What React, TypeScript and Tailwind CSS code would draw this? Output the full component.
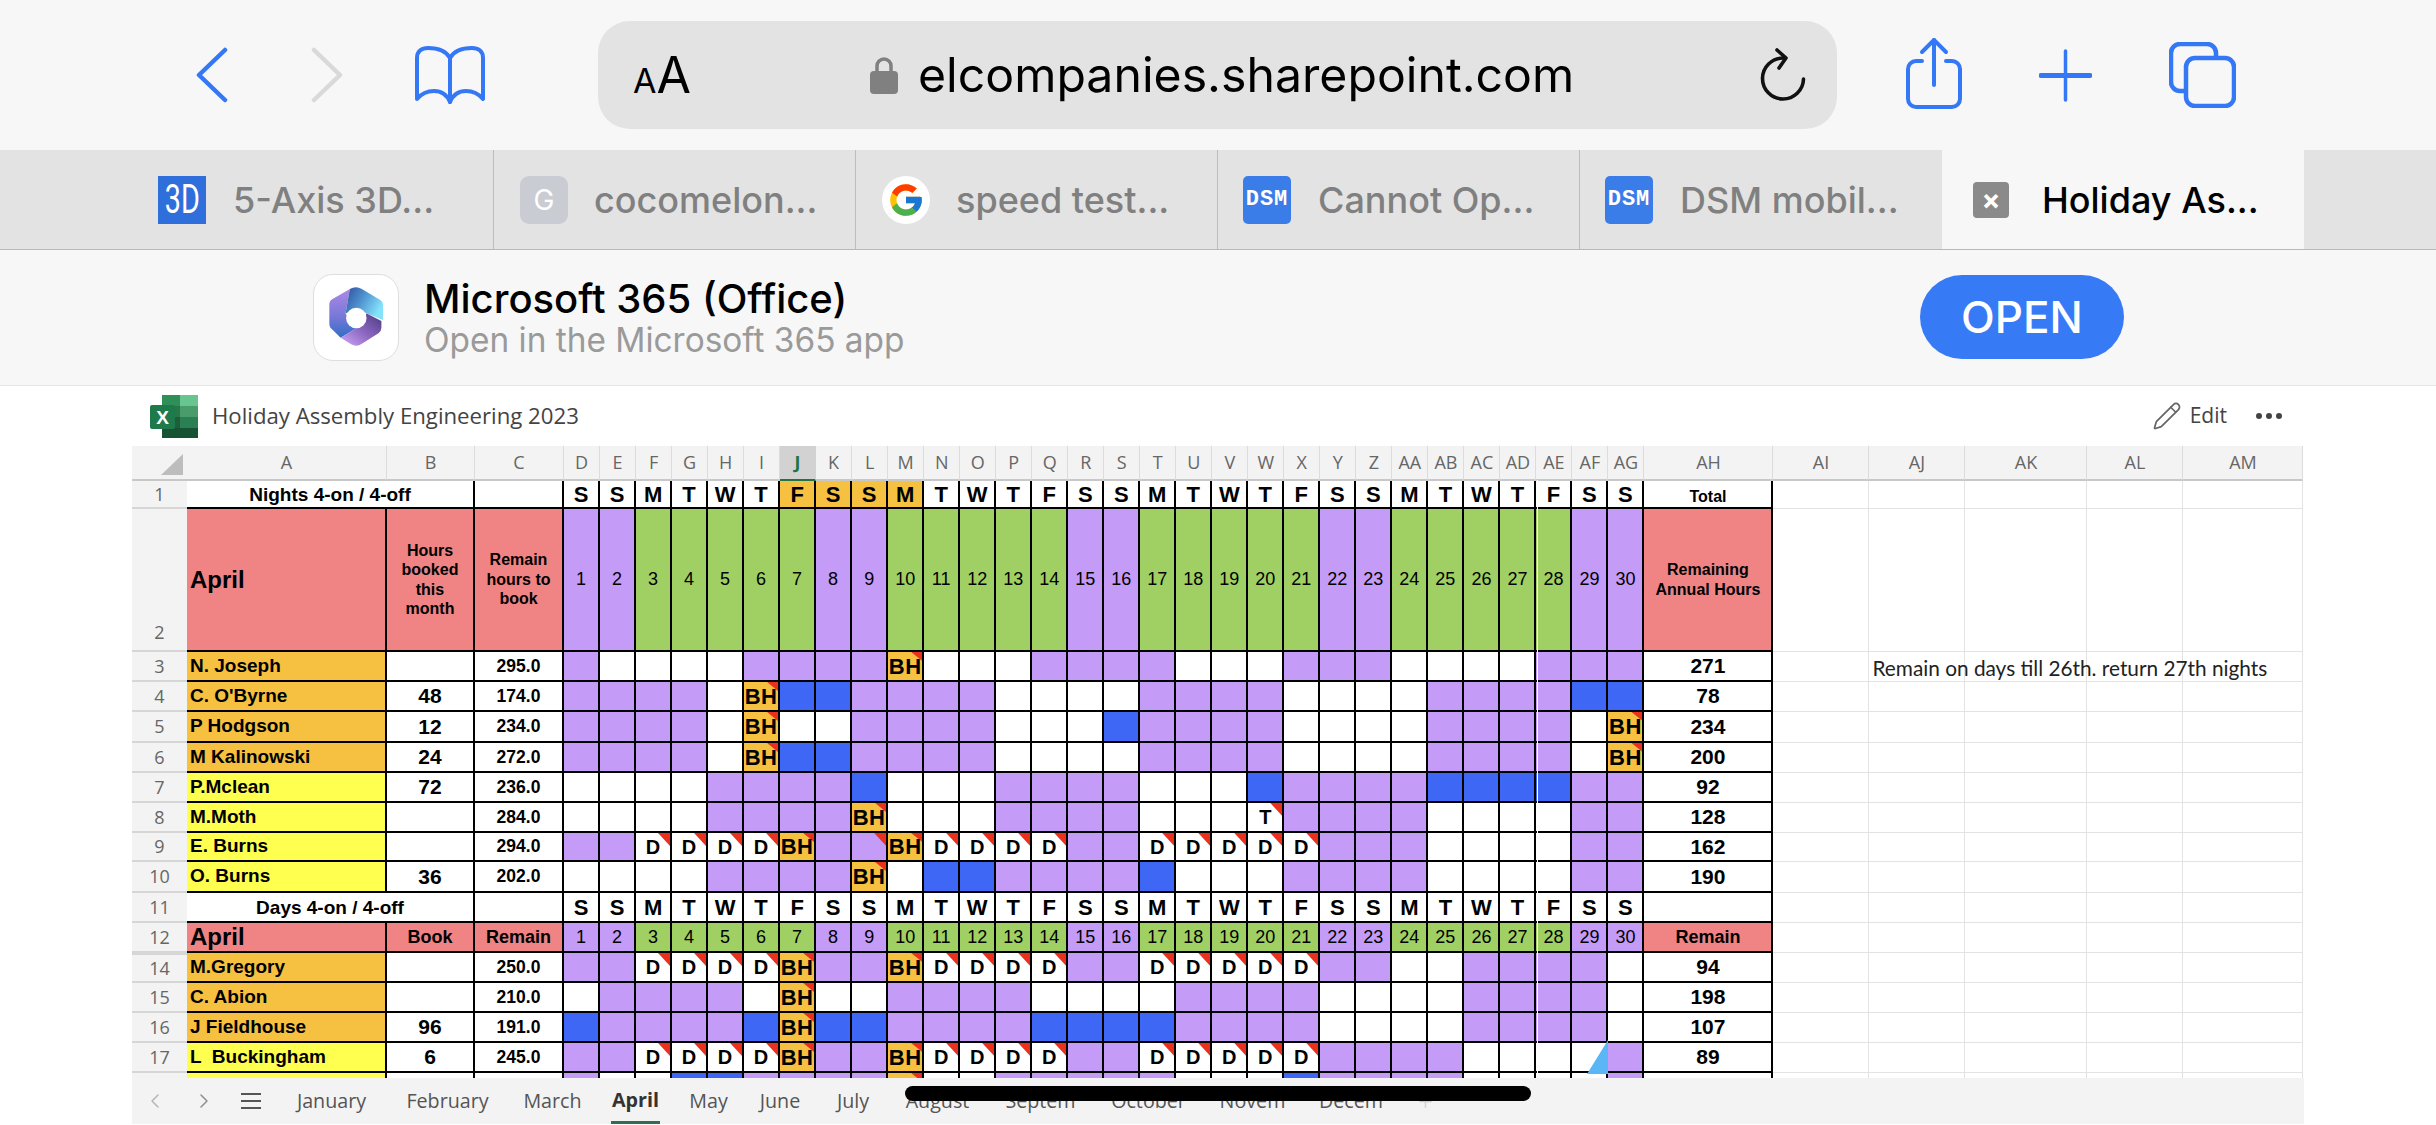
import React from "react";
import { ChevronLeft, ChevronRight, Pencil } from "lucide-react";
import { FcGoogle } from "react-icons/fc";

const cols = ["A","B","C","D","E","F","G","H","I","J","K","L","M","N","O","P","Q","R","S","T","U","V","W","X","Y","Z","AA","AB","AC","AD","AE","AF","AG","AH","AI","AJ","AK","AL","AM"];
const dayLetters = "SSMTWTFSSMTWTFSSMTWTFSSMTWTFSS".split("");
const days = dayLetters.map((_, i) => i + 1);
const isWeekend = (d: number) => [1, 2, 8, 9, 15, 16, 22, 23, 29, 30].includes(d);

type Person = { row: string; name: string; tone: string; booked: string; remain: string; cells: string; total: string };

const ORANGE = "bg-[#f6c141]";
const YELLOW = "bg-[#ffff4f]";

const nights: Person[] = [
    { row: "3", name: "N. Joseph", tone: ORANGE, booked: "", remain: "295.0", cells: "pwwwwppppHwwwppppwwwpppwwwwppp", total: "271" },
    { row: "4", name: "C. O'Byrne", tone: ORANGE, booked: "48", remain: "174.0", cells: "ppppwHbbppppwwwwppppwwwwppppbb", total: "78" },
    { row: "5", name: "P Hodgson", tone: ORANGE, booked: "12", remain: "234.0", cells: "ppppwHwwppppwwwbppppwwwwppppwH", total: "234" },
    { row: "6", name: "M Kalinowski", tone: ORANGE, booked: "24", remain: "272.0", cells: "ppppwHbbppppwwwwppppwwwwppppwH", total: "200" },
    { row: "7", name: "P.Mclean", tone: YELLOW, booked: "72", remain: "236.0", cells: "wwwwppppbwwwppppwwwbppppbbbbpp", total: "92" },
    { row: "8", name: "M.Moth", tone: YELLOW, booked: "", remain: "284.0", cells: "wwwwppppHwwwppppwwwTppppwwwwpp", total: "128" },
    { row: "9", name: "E. Burns", tone: YELLOW, booked: "", remain: "294.0", cells: "ppDDDDHpfHDDDDppDDDDDpppwwwwpp", total: "162" },
    { row: "10", name: "O. Burns", tone: YELLOW, booked: "36", remain: "202.0", cells: "wwwwppppHwbbppppbwwwppppwwwwpp", total: "190" },
];

const dayShift: Person[] = [
    { row: "14", name: "M.Gregory", tone: ORANGE, booked: "", remain: "250.0", cells: "ppDDDDHppHDDDDppDDDDDppwwppppw", total: "94" },
    { row: "15", name: "C. Abion", tone: ORANGE, booked: "", remain: "210.0", cells: "wppppwHwwppppwwwwppppwwwwppppw", total: "198" },
    { row: "16", name: "J Fieldhouse", tone: ORANGE, booked: "96", remain: "191.0", cells: "bppppbHbbppppbbbbppppwwwwppppw", total: "107" },
    { row: "17", name: "L  Buckingham", tone: YELLOW, booked: "6", remain: "245.0", cells: "ppDDDDHppHDDDDppDDDDDppppwwwwp", total: "89" },
    { row: "", name: "", tone: YELLOW, booked: "", remain: "", cells: "pwwbbppppHwwpppppwwwbppppwwwwp", total: "" },
];

const cellTone: Record<string, string> = {
    p: "bg-[#c59bf8]",
    f: "bg-[#c59bf8]",
    w: "bg-white",
    b: "bg-[#3f67f5]",
    H: ORANGE,
    D: "bg-white",
    T: "bg-white",
};

const sheetTabs = [
    { label: "January", cls: "ml-[34px] w-[73px]" },
    { label: "February", cls: "ml-[39px] w-[81px]" },
    { label: "March", cls: "ml-[37px] w-[55px]" },
    { label: "April", cls: "ml-[31px] w-[49px] font-bold text-[#333] border-b-[3px] border-[#2f6f4f]" },
    { label: "May", cls: "ml-[30px] w-[37px]" },
    { label: "June", cls: "ml-[31px] w-[44px]" },
    { label: "July", cls: "ml-[33px] w-[36px]" },
    { label: "August", cls: "ml-[35px] w-[63px]" },
    { label: "Septem", cls: "ml-[37px] w-[69px]" },
    { label: "October", cls: "ml-[38px] w-[71px]" },
    { label: "Novem", cls: "ml-[37px] w-[63px]" },
    { label: "Decem", cls: "ml-[36px] w-[62px]" },
];

const arial = "[font-family:'Liberation_Sans',Arial,sans-serif]";
const blackCell = "relative flex items-center justify-center border-r-2 border-b-2 border-black overflow-hidden text-black " + arial;
const gridCell = "border-r border-b border-[#e3e3e3]";
const rowHead = "flex items-center justify-center bg-[#f3f3f3] border-b-2 border-[#d6d6d6] text-[18px] text-[#666]";

const EmptyCols = ({ row }: { row: string }) => (
    <>
        <div className={gridCell} />
        <div className={gridCell + " relative"}>
            {row === "3" && (
                <span className="absolute left-[3px] top-0 whitespace-nowrap [font-family:Lato,sans-serif] text-[20.8px] text-[#222]">
                    Remain on days till 26th. return 27th nights
                </span>
            )}
        </div>
        <div className={gridCell} />
        <div className={gridCell} />
        <div className={gridCell} />
    </>
);

const DayCell = ({ code }: { code: string }) => (
    <div className={blackCell + " " + cellTone[code]}>
        {code === "H" && <span className="absolute top-0 right-0 w-[11px] h-[9px] bg-[#e9311e] [clip-path:polygon(0_0,100%_0,100%_100%)]" />}
        {(code === "D" || code === "T" || code === "f") && <span className="absolute top-0 right-0 w-[12px] h-[13px] bg-[#e9311e] [clip-path:polygon(0_0,100%_0,100%_100%)]" />}
        {code === "H" && <span className="relative text-[22px] font-bold whitespace-nowrap tracking-[0.5px]">BH</span>}
        {(code === "D" || code === "T") && <span className="relative text-[20px] font-bold">{code}</span>}
    </div>
);

const PersonRow = ({ p }: { p: Person }) => (
    <>
        <div className={rowHead + (p.row === "14" ? " border-t-2 border-t-[#d6d6d6]" : "")}>{p.row}</div>
        <div className={blackCell + " !justify-start pl-[3px] text-[19px] font-bold whitespace-pre " + p.tone}>{p.name}</div>
        <div className={blackCell + " bg-white text-[21px] font-bold"}>{p.booked}</div>
        <div className={blackCell + " bg-white text-[17.5px] font-bold"}>{p.remain}</div>
        {p.cells.split("").map((c, i) => (
            <DayCell key={i} code={c} />
        ))}
        <div className={blackCell + " bg-white text-[21px] font-bold"}>{p.total}</div>
        <EmptyCols row={p.row} />
    </>
);

const LetterRow = ({ highlight }: { highlight: boolean }) => (
    <>
        {dayLetters.map((l, i) => (
            <div key={i} className={blackCell + " text-[22px] font-bold " + (highlight && i >= 6 && i <= 9 ? ORANGE : "bg-white")}>{l}</div>
        ))}
    </>
);

const BackIcon = () => (
    <svg width="32" height="56" viewBox="0 0 32 56" fill="none" stroke="#3478f6" strokeWidth="4.5" strokeLinecap="round" strokeLinejoin="round">
        <path d="M29 3 L3 28 L29 53" />
    </svg>
);

const ForwardIcon = () => (
    <svg width="32" height="56" viewBox="0 0 32 56" fill="none" stroke="#d9d9d9" strokeWidth="4.5" strokeLinecap="round" strokeLinejoin="round">
        <path d="M3 3 L29 28 L3 53" />
    </svg>
);

const BookIcon = () => (
    <svg width="72" height="58" viewBox="0 0 72 58" fill="none" stroke="#3478f6" strokeWidth="4" strokeLinejoin="round" strokeLinecap="round">
        <path d="M36 12 C31 3 22 2 14 2 C8 2 3 5 3 12 V53 C8 47 14 45 20 45 C27 45 33 49 36 56 C39 49 45 45 52 45 C58 45 64 47 69 53 V12 C69 5 64 2 58 2 C50 2 41 3 36 12 Z" />
        <path d="M36 12 V56" />
    </svg>
);

const LockIcon = () => (
    <svg width="28" height="38" viewBox="0 0 28 38">
        <path d="M7 17 V10 a7 7 0 0 1 14 0 V17" fill="none" stroke="#808080" strokeWidth="3.5" />
        <rect x="0" y="15" width="28" height="23" rx="4" fill="#808080" />
    </svg>
);

const ReloadIcon = () => (
    <svg width="46" height="54" viewBox="0 0 46 54" fill="none" stroke="#111" strokeWidth="3.6" strokeLinecap="round" strokeLinejoin="round">
        <path d="M23 10 A20.5 20.5 0 1 0 43.5 31" />
        <path d="M17 2 L26 10 L19 20" />
    </svg>
);

const ShareIcon = () => (
    <svg width="56" height="72" viewBox="0 0 56 72" fill="none" stroke="#3478f6" strokeWidth="4" strokeLinecap="round" strokeLinejoin="round">
        <path d="M16 24 H10 a8 8 0 0 0 -8 8 V62 a8 8 0 0 0 8 8 H46 a8 8 0 0 0 8 -8 V32 a8 8 0 0 0 -8 -8 H40" />
        <path d="M28 48 V3" />
        <path d="M16 15 L28 3 L40 15" />
    </svg>
);

const PlusIcon = () => (
    <svg width="53" height="53" viewBox="0 0 53 53" fill="none" stroke="#3478f6" strokeLinecap="round">
        <path d="M26.5 2 V51" strokeWidth="3.5" />
        <path d="M2 26.5 H51" strokeWidth="5" />
    </svg>
);

const TabsIcon = () => (
    <svg width="67" height="66" viewBox="0 0 67 66" fill="none" stroke="#3478f6" strokeWidth="4.5">
        <path d="M17 49 H11 a9 9 0 0 1 -9 -9 V11 a9 9 0 0 1 9 -9 H38 a9 9 0 0 1 9 9 V16" />
        <rect x="17" y="16" width="48" height="48" rx="9" />
    </svg>
);

const OfficeIcon = () => (
    <div className="w-[86px] h-[87px] bg-white border border-[#dedede] rounded-[20px] shrink-0">
        <svg width="84" height="85" viewBox="0 0 86 87">
            <defs>
                <linearGradient id="oLeft" x1="0" y1="0" x2="0" y2="1">
                    <stop offset="0" stopColor="#ad88e6" />
                    <stop offset="0.55" stopColor="#7a78d8" />
                    <stop offset="1" stopColor="#2f6fc6" />
                </linearGradient>
                <linearGradient id="oTop" x1="0" y1="0" x2="1" y2="0.5">
                    <stop offset="0" stopColor="#2f4f9c" />
                    <stop offset="0.5" stopColor="#4f93d0" />
                    <stop offset="1" stopColor="#84e2fb" />
                </linearGradient>
                <linearGradient id="oBottom" x1="0" y1="1" x2="1" y2="0">
                    <stop offset="0" stopColor="#d1a8f8" />
                    <stop offset="0.5" stopColor="#8a66c0" />
                    <stop offset="1" stopColor="#4d3a80" />
                </linearGradient>
            </defs>
            <path d="M36.7 14.3 L19 24.5 Q15.7 26.5 15.7 30 V50 Q15.7 54 19 56 L27.3 64.3 L44 54.3 L32.3 39.3 Z" fill="url(#oLeft)" />
            <path d="M36.7 14.3 Q43 11 49 14.3 L67 25 Q70.7 27 70.7 31 V46 L54 39.3 L44 34.3 L32.3 39.3 Z" fill="url(#oTop)" />
            <path d="M54 39.3 L69 47 V54 Q69 57.5 66 59.5 L49 70.5 Q44 74 38 71 L27.3 64.3 L42.3 55.3 Z" fill="url(#oBottom)" />
            <circle cx="43.3" cy="44" r="10.5" fill="white" />
        </svg>
    </div>
);

const ExcelIcon = () => (
    <svg width="48" height="43" viewBox="0 0 48 43">
        <rect x="12" y="0" width="18" height="11" fill="#2f8f58" />
        <rect x="30" y="0" width="18" height="11" fill="#68c58f" />
        <rect x="12" y="11" width="18" height="11" fill="#26784a" />
        <rect x="30" y="11" width="18" height="11" fill="#4a9c6a" />
        <rect x="12" y="22" width="18" height="11" fill="#1c5f3a" />
        <rect x="30" y="22" width="18" height="11" fill="#2a8052" />
        <rect x="12" y="33" width="36" height="10" fill="#175233" />
        <rect x="0" y="10" width="25" height="24" rx="2" fill="#1f7a4b" />
        <text x="12.5" y="29" textAnchor="middle" fill="white" fontSize="19" fontWeight="700" fontFamily="Liberation Sans, sans-serif">X</text>
    </svg>
);

const BrowserTab = ({ icon, label, active, noBorder }: { icon: React.ReactNode; label: string; active?: boolean; noBorder?: boolean }) => (
    <div className={"w-[362px] h-full flex items-center overflow-hidden " + (active ? "bg-[#f7f7f7] " : "") + (active || noBorder ? "" : "border-r border-[#bdbdbd]")}>
        {icon}
        <span className={"[font-family:Inter,sans-serif] font-medium text-[36px] whitespace-nowrap " + (active ? "text-black" : "text-[#808080]")}>{label}</span>
    </div>
);

const DsmBadge = () => (
    <div className="ml-[25px] mr-[27px] w-[48px] h-[48px] bg-[#3a7de8] rounded-[5px] flex items-center justify-center text-white font-bold text-[22px] tracking-[1px] [font-family:'Liberation_Mono',monospace]">
        DSM
    </div>
);

export default function App() {
    return (
        <div className="w-[2436px] h-[1125px] bg-white overflow-hidden flex flex-col [font-family:'Open_Sans',sans-serif]">
            {/* safari toolbar */}
            <div className="h-[150px] bg-[#f7f7f7] flex items-center pl-[196px] shrink-0">
                <BackIcon />
                <div className="ml-[83px]"><ForwardIcon /></div>
                <div className="ml-[71px]"><BookIcon /></div>
                <div className="ml-[112px] w-[1239px] h-[108px] bg-[#e3e3e3] rounded-[32px] flex items-center pl-[35px] pr-[31px] text-black [font-family:Inter,sans-serif]">
                    <span className="w-[57px] whitespace-nowrap leading-none"><span className="text-[34px]">A</span><span className="text-[50px]">A</span></span>
                    <div className="ml-[180px]"><LockIcon /></div>
                    <span className="ml-[20px] text-[48.2px] leading-none whitespace-nowrap">elcompanies.sharepoint.com</span>
                    <div className="ml-auto"><ReloadIcon /></div>
                </div>
                <div className="ml-[69px] mb-[4px]"><ShareIcon /></div>
                <div className="ml-[77px]"><PlusIcon /></div>
                <div className="ml-[77px]"><TabsIcon /></div>
            </div>

            {/* tab strip */}
            <div className="h-[100px] bg-[#e3e3e3] border-b border-[#b8b8b8] flex pl-[132px] shrink-0">
                <BrowserTab
                    label="5-Axis 3D..."
                    icon={
                        <div className="ml-[26px] mr-[27px] w-[48px] h-[48px] bg-[#2f6fdc] flex items-center justify-center text-white text-[40px] leading-none [font-family:Roboto,sans-serif] overflow-hidden">
                            <span className="scale-x-[0.72]">3D</span>
                        </div>
                    }
                />
                <BrowserTab
                    label="cocomelon..."
                    icon={<div className="ml-[26px] mr-[26px] w-[48px] h-[48px] bg-[#c9ccd3] rounded-[9px] flex items-center justify-center text-white text-[28px] [font-family:Inter,sans-serif]">G</div>}
                />
                <BrowserTab
                    label="speed test..."
                    icon={<div className="ml-[26px] mr-[26px] w-[48px] h-[48px] bg-white rounded-full flex items-center justify-center"><FcGoogle size={38} /></div>}
                />
                <BrowserTab label="Cannot Op..." icon={<DsmBadge />} />
                <BrowserTab noBorder label="DSM mobil..." icon={<DsmBadge />} />
                <BrowserTab
                    active
                    label="Holiday As..."
                    icon={<div className="ml-[31px] mr-[33px] w-[36px] h-[36px] bg-[#8a8a8a] rounded-[4px] flex items-center justify-center text-white text-[28px] leading-none font-bold [font-family:Inter,sans-serif]">×</div>}
                />
            </div>

            {/* app banner */}
            <div className="h-[135px] bg-[#f7f7f7] flex items-center pl-[313px] shrink-0 [font-family:Inter,sans-serif]">
                <OfficeIcon />
                <div className="ml-[25px] flex flex-col">
                    <span className="text-[40px] leading-[46px] font-medium text-black">Microsoft 365 (Office)</span>
                    <span className="text-[33.4px] leading-[37px] text-[#9a9a9a]">Open in the Microsoft 365 app</span>
                </div>
                <div className="ml-auto mr-[312px] mb-[2px] w-[204px] h-[84px] bg-[#377af6] rounded-full flex items-center justify-center text-white text-[44px] font-medium">OPEN</div>
            </div>

            {/* excel online */}
            <div className="px-[132px] shrink-0">
                <div className="h-[61px] -mx-[132px] px-[132px] border-t border-[#e5e5e5] flex items-center">
                    <div className="ml-[18px]"><ExcelIcon /></div>
                    <span className="ml-[14px] text-[22.2px] text-[#444] whitespace-nowrap">Holiday Assembly Engineering 2023</span>
                    <div className="ml-auto flex items-center mr-[22px] text-[#444]">
                        <Pencil size={30} strokeWidth={1.4} className="text-[#666]" />
                        <span className="ml-[8px] text-[21px]">Edit</span>
                        <div className="ml-[29px] flex gap-[4px]">
                            <span className="w-[6px] h-[6px] rounded-full bg-[#444]" />
                            <span className="w-[6px] h-[6px] rounded-full bg-[#444]" />
                            <span className="w-[6px] h-[6px] rounded-full bg-[#444]" />
                        </div>
                    </div>
                </div>

                <div className="relative w-[2172px] h-[632px] overflow-hidden grid grid-cols-[55px_200px_88px_89px_repeat(30,36.03px)_129px_96px_96px_122px_96px_120px] grid-rows-[35px_28px_143px_30px_30px_31px_30px_30px_30px_29px_31px_30px_30px_30px_30px_30px_30px_30px]">
                    {/* column letters */}
                    <div className="bg-[#f3f3f3] border-b-2 border-[#c8c8c8] flex items-end justify-end pr-[4px] pb-[4px]">
                        <span className="w-[22px] h-[21px] bg-[#bdbdbd] [clip-path:polygon(100%_0,100%_100%,0_100%)]" />
                    </div>
                    {cols.map((c) => (
                        <div
                            key={c}
                            className={
                                "flex items-center justify-center border-r text-[18px] border-b-2 " +
                                (c === "J" ? "bg-[#d2d2d2] border-[#d2d2d2] border-b-[#217346] text-[#217346] font-bold" : "bg-[#f3f3f3] border-r-[#dcdcdc] border-b-[#c8c8c8] text-[#666]")
                            }
                        >
                            {c}
                        </div>
                    ))}

                    {/* row 1 */}
                    <div className={rowHead}>1</div>
                    <div className={blackCell + " col-span-2 bg-white text-[19px] font-bold pt-[2px]"}>Nights 4-on / 4-off</div>
                    <div className={blackCell + " bg-white"} />
                    <LetterRow highlight />
                    <div className={blackCell + " bg-white text-[16px] font-bold pt-[6px]"}>Total</div>
                    <EmptyCols row="1" />

                    {/* row 2 */}
                    <div className={rowHead + " !items-end pb-[4px]"}>2</div>
                    <div className={blackCell + " !justify-start pl-[3px] bg-[#f08484] text-[24px] font-bold"}>April</div>
                    <div className={blackCell + " bg-[#f08484] text-[16px] leading-[19.5px] font-bold text-center"}>Hours<br />booked<br />this<br />month</div>
                    <div className={blackCell + " bg-[#f08484] text-[16px] leading-[19.5px] font-bold text-center"}>Remain<br />hours to<br />book</div>
                    {days.map((d) => (
                        <div key={d} className={blackCell + " text-[18px] text-[#222] " + (isWeekend(d) ? "bg-[#c59bf8]" : "bg-[#a0d063]")}>{d}</div>
                    ))}
                    <div className={blackCell + " bg-[#f08484] text-[16px] leading-[20px] font-bold text-center"}>Remaining<br />Annual Hours</div>
                    <EmptyCols row="2" />

                    {nights.map((p) => (
                        <PersonRow key={p.row} p={p} />
                    ))}

                    {/* row 11 */}
                    <div className={rowHead}>11</div>
                    <div className={blackCell + " col-span-2 bg-white text-[19px] font-bold pt-[2px]"}>Days 4-on / 4-off</div>
                    <div className={blackCell + " bg-white"} />
                    <LetterRow highlight={false} />
                    <div className={blackCell + " bg-white"} />
                    <EmptyCols row="11" />

                    {/* row 12 */}
                    <div className={rowHead}>12</div>
                    <div className={blackCell + " !justify-start pl-[3px] bg-[#f08484] text-[24px] font-bold"}>April</div>
                    <div className={blackCell + " bg-[#f08484] text-[18px] font-bold"}>Book</div>
                    <div className={blackCell + " bg-[#f08484] text-[18px] font-bold"}>Remain</div>
                    {days.map((d) => (
                        <div key={d} className={blackCell + " text-[18px] text-[#222] " + (isWeekend(d) ? "bg-[#c59bf8]" : "bg-[#a0d063]")}>{d}</div>
                    ))}
                    <div className={blackCell + " bg-[#f08484] text-[18px] font-bold"}>Remain</div>
                    <EmptyCols row="12" />

                    {dayShift.map((p, i) => (
                        <PersonRow key={i} p={p} />
                    ))}

                    {/* seam in the screenshot and the selection handle */}
                    <span className="absolute left-[1405px] top-[34px] w-px h-[598px] bg-white" />
                    <span className="absolute left-[1455px] top-[594px] w-[21px] h-[34px] bg-[#5ab6f5] [clip-path:polygon(100%_0,100%_100%,0_100%)]" />
                </div>

                {/* sheet tabs */}
                <div className="relative w-[2172px] h-[46px] bg-[#f3f3f3] flex items-center text-[19.7px] text-[#555]">
                    <ChevronLeft size={24} strokeWidth={1.5} className="ml-[11px] text-[#b5b5b5]" />
                    <ChevronRight size={24} strokeWidth={1.5} className="ml-[25px] text-[#8f8f8f]" />
                    <div className="ml-[25px] w-[20px] flex flex-col gap-[5px]">
                        <span className="h-[2px] bg-[#555]" />
                        <span className="h-[2px] bg-[#555]" />
                        <span className="h-[2px] bg-[#555]" />
                    </div>
                    {sheetTabs.map((t) => (
                        <span key={t.label} className={"h-full flex items-center justify-center whitespace-nowrap " + t.cls}>{t.label}</span>
                    ))}
                    <span className="ml-[36px] text-[26px] font-light text-[#ccc]">+</span>
                    <span className="absolute left-[773px] top-[8px] w-[626px] h-[15px] bg-black rounded-full" />
                </div>
            </div>
        </div>
    );
}
